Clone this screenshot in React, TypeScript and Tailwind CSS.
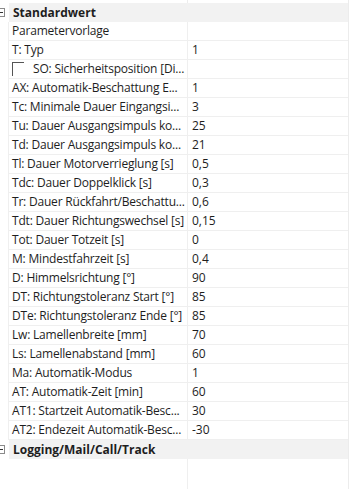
import React from 'react';

// Eigenschaftsraster: Gruppe "Standardwert" mit Parametern und Werten
const rows: [string, string][] = [
  ['Parametervorlage', ''],
  ['T: Typ', '1'],
  ['SO: Sicherheitsposition [Di...', ''],
  ['AX: Automatik-Beschattung E...', '1'],
  ['Tc: Minimale Dauer Eingangsi...', '3'],
  ['Tu: Dauer Ausgangsimpuls ko...', '25'],
  ['Td: Dauer Ausgangsimpuls ko...', '21'],
  ['Tl: Dauer Motorverrieglung [s]', '0,5'],
  ['Tdc: Dauer Doppelklick [s]', '0,3'],
  ['Tr: Dauer Rückfahrt/Beschattu...', '0,6'],
  ['Tdt: Dauer Richtungswechsel [s]', '0,15'],
  ['Tot: Dauer Totzeit [s]', '0'],
  ['M: Mindestfahrzeit [s]', '0,4'],
  ['D: Himmelsrichtung [°]', '90'],
  ['DT: Richtungstoleranz Start [°]', '85'],
  ['DTe: Richtungstoleranz Ende [°]', '85'],
  ['Lw: Lamellenbreite [mm]', '70'],
  ['Ls: Lamellenabstand [mm]', '60'],
  ['Ma: Automatik-Modus', '1'],
  ['AT: Automatik-Zeit [min]', '60'],
  ['AT1: Startzeit Automatik-Besc...', '30'],
  ['AT2: Endezeit Automatik-Besc...', '-30'],
];

function Collapse() {
  return (
    <svg width="9" height="9" viewBox="0 0 9 9" className="absolute left-[-4px] top-[5px]">
      <rect x="0.5" y="0.5" width="8" height="8" fill="white" stroke="#8a8a8a" />
      <line x1="2" y1="4.5" x2="7" y2="4.5" stroke="#333" />
    </svg>
  );
}

function Group({ title }: { title: string }) {
  return (
    <div className="flex h-[19px]">
      <div className="relative w-[9px] shrink-0 bg-white">
        <Collapse />
      </div>
      <div className="flex-1 bg-[#f2f2f2] pl-1 font-bold text-[12px] leading-[19px] text-[#1e1e1e]">{title}</div>
    </div>
  );
}

export default function App() {
  return (
    <div
      className="w-[349px] h-[489px] overflow-hidden bg-white text-[12px] text-[#1e1e1e] border-r border-[#ececec]"
      style={{ fontFamily: '"Open Sans", "Noto Sans", sans-serif' }}
    >
      <div className="flex h-[3px]">
        <div className="w-[9px]" />
        <div className="w-[179px] border-r border-[#ededed]" />
      </div>
      <Group title="Standardwert" />
      {rows.map(([name, value], i) => (
        <div key={i} className="flex h-[19px]">
          <div className="w-[9px] shrink-0 border-r border-[#efefef]" />
          <div className="flex w-[179px] shrink-0 items-center border-b border-r border-[#efefef] pl-[3px] whitespace-nowrap overflow-hidden tracking-[-0.2px]">
            {name.startsWith('SO:') ? (
              <>
                <span className="mr-[9px] ml-[0px] inline-block h-[14px] w-[12px] border-l border-t border-[#555]" />
                {name}
              </>
            ) : (
              name
            )}
          </div>
          <div className="flex-1 flex items-center border-b border-[#efefef] pl-[4px]">{value}</div>
        </div>
      ))}
      <Group title="Logging/Mail/Call/Track" />
      <div className="flex h-[40px]">
        <div className="w-[188px] border-r border-[#efefef]" />
      </div>
    </div>
  );
}
